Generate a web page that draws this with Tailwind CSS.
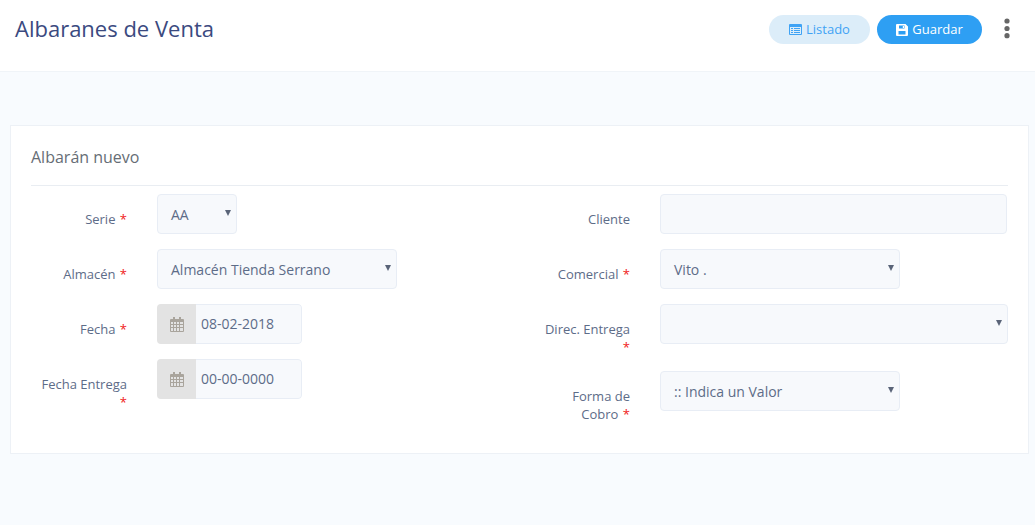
<!DOCTYPE html>
<html lang="es">
<head>
<meta charset="utf-8">
<script src="https://cdn.jsdelivr.net/npm/@tailwindcss/browser@4"></script>
</head>
<body class="m-0 w-[1035px] h-[525px] overflow-hidden bg-[#f8fbfe] font-['Open_Sans',sans-serif] text-[#5d6c88]">
<header class="h-[72px] bg-white border-b border-[#f0f4f8] flex items-start pl-[15px] pr-[25px]">
  <h1 class="text-[22px] leading-[30px] mt-[13px] text-[#3b4a7f] font-normal">Albaranes de Venta</h1>
  <div class="ml-auto flex items-center mt-[15px] h-[29px]">
    <button class="w-[101px] h-[29px] rounded-full bg-[#dcedf9] text-[#3fa3f5] text-[13px] flex items-center justify-center gap-[4px]">
      <svg width="13" height="11" viewBox="0 0 13 11"><path fill="#3fa3f5" fill-rule="evenodd" d="M1 0h11a1 1 0 0 1 1 1v9a1 1 0 0 1-1 1H1a1 1 0 0 1-1-1V1a1 1 0 0 1 1-1zm0 3v7h11V3zm1 1h2v1H2zm3 0h6v1H5zM2 6h2v1H2zm3 0h6v1H5zM2 8h2v1H2zm3 0h6v1H5z"/></svg>
      Listado
    </button>
    <button class="ml-[7px] w-[105px] h-[29px] rounded-full bg-[#2e9ff3] text-white text-[13px] flex items-center justify-center gap-[4px]">
      <svg width="12" height="12" viewBox="0 0 12 12"><path fill="#fff" fill-rule="evenodd" d="M1 0h8.5L12 2.5V11a1 1 0 0 1-1 1H1a1 1 0 0 1-1-1V1a1 1 0 0 1 1-1zm2 1.5v3h5.5v-3zm3.8.4h1.2v2.2H6.8zM2.5 7v3.5h7V7z"/></svg>
      Guardar
    </button>
    <svg class="ml-[22px] mb-[2px]" width="6" height="21" viewBox="0 0 6 21"><circle cx="3" cy="3" r="2.6" fill="#666"/><circle cx="3" cy="10.5" r="2.6" fill="#666"/><circle cx="3" cy="17.7" r="2.6" fill="#666"/></svg>
  </div>
</header>
<main class="mt-[53px] ml-[10px] w-[1019px] h-[329px] bg-white border border-[#edf1f6] px-[20px]">
  <h2 class="h-[60px] border-b border-[#e9edf2] pt-[19px] text-[16px] leading-[24px] font-normal text-[#666d75] w-[977px]">Albarán nuevo</h2>
  <div class="flex mt-[8px] gap-[15px] w-[977px]">
    <div class="w-[488px]">
      <div class="flex mb-[15px]">
        <label class="w-[96px] mr-[30px] pt-[16px] text-right text-[13px] leading-[18px]">Serie <span class="text-[#f02020] ml-px">*</span></label>
        <div class="relative w-[80px] h-[40px] rounded-[4px] border border-[#e8edf5] bg-[#f7f9fc] text-[14px] leading-[40px] pl-[13px]">AA<span class="absolute right-[5px] top-[15px] w-0 h-0 border-x-[3px] border-x-transparent border-t-[6px] border-t-[#5a6478]"></span></div>
      </div>
      <div class="flex mb-[15px]">
        <label class="w-[96px] mr-[30px] pt-[16px] text-right text-[13px] leading-[18px]">Almacén <span class="text-[#f02020] ml-px">*</span></label>
        <div class="relative w-[240px] h-[40px] rounded-[4px] border border-[#e8edf5] bg-[#f7f9fc] text-[14px] leading-[40px] pl-[13px]">Almacén Tienda Serrano<span class="absolute right-[5px] top-[15px] w-0 h-0 border-x-[3px] border-x-transparent border-t-[6px] border-t-[#5a6478]"></span></div>
      </div>
      <div class="flex mb-[15px]">
        <label class="w-[96px] mr-[30px] pt-[16px] text-right text-[13px] leading-[18px]">Fecha <span class="text-[#f02020] ml-px">*</span></label>
        <div class="flex w-[145px] h-[40px] rounded-[4px] text-[14px] leading-[38px] overflow-hidden">
          <span class="w-[39px] bg-[#e3e3e3] flex items-center justify-center"><svg width="14" height="15" viewBox="0 0 14 15"><path fill="#a9a49c" fill-rule="evenodd" d="M3 0h2v2h4V0h2v2h2a1 1 0 0 1 1 1v11a1 1 0 0 1-1 1H1a1 1 0 0 1-1-1V3a1 1 0 0 1 1-1h2zM1 5v2h2V5zm3 0v2h2V5zm3 0v2h2V5zm3 0v2h3V5zM1 8v2h2V8zm3 0v2h2V8zm3 0v2h2V8zm3 0v2h3V8zM1 11v3h2v-3zm3 0v3h2v-3zm3 0v3h2v-3zm3 0v3h3v-3z"/></svg></span>
          <span class="flex-1 pl-[5px] border border-l-0 border-[#e8edf5] rounded-r-[4px] bg-[#f7f9fc]">08-02-2018</span>
        </div>
      </div>
      <div class="flex">
        <label class="w-[96px] mr-[30px] pt-[16px] text-right text-[13px] leading-[18px]">Fecha Entrega <span class="text-[#f02020] ml-px">*</span></label>
        <div class="flex w-[145px] h-[40px] rounded-[4px] text-[14px] leading-[38px] overflow-hidden">
          <span class="w-[39px] bg-[#e3e3e3] flex items-center justify-center"><svg width="14" height="15" viewBox="0 0 14 15"><path fill="#a9a49c" fill-rule="evenodd" d="M3 0h2v2h4V0h2v2h2a1 1 0 0 1 1 1v11a1 1 0 0 1-1 1H1a1 1 0 0 1-1-1V3a1 1 0 0 1 1-1h2zM1 5v2h2V5zm3 0v2h2V5zm3 0v2h2V5zm3 0v2h3V5zM1 8v2h2V8zm3 0v2h2V8zm3 0v2h2V8zm3 0v2h3V8zM1 11v3h2v-3zm3 0v3h2v-3zm3 0v3h2v-3zm3 0v3h3v-3z"/></svg></span>
          <span class="flex-1 pl-[5px] border border-l-0 border-[#e8edf5] rounded-r-[4px] bg-[#f7f9fc]">00-00-0000</span>
        </div>
      </div>
    </div>
    <div class="w-[474px]">
      <div class="flex mb-[15px]">
        <label class="w-[96px] mr-[30px] pt-[16px] text-right text-[13px] leading-[18px]">Cliente</label>
        <div class="w-[347px] h-[40px] rounded-[4px] border border-[#e8edf5] bg-[#f7f9fc]"></div>
      </div>
      <div class="flex mb-[15px]">
        <label class="w-[96px] mr-[30px] pt-[16px] text-right text-[13px] leading-[18px]">Comercial <span class="text-[#f02020] ml-px">*</span></label>
        <div class="relative w-[240px] h-[40px] rounded-[4px] border border-[#e8edf5] bg-[#f7f9fc] text-[14px] leading-[40px] pl-[13px]">Vito .<span class="absolute right-[5px] top-[15px] w-0 h-0 border-x-[3px] border-x-transparent border-t-[6px] border-t-[#5a6478]"></span></div>
      </div>
      <div class="flex mb-[15px]">
        <label class="w-[96px] mr-[30px] pt-[16px] text-right text-[13px] leading-[18px]">Direc. Entrega <span class="text-[#f02020] ml-px">*</span></label>
        <div class="relative w-[348px] h-[40px] rounded-[4px] border border-[#e8edf5] bg-[#f7f9fc]"><span class="absolute right-[5px] top-[15px] w-0 h-0 border-x-[3px] border-x-transparent border-t-[6px] border-t-[#5a6478]"></span></div>
      </div>
      <div class="flex">
        <label class="w-[96px] mr-[30px] pt-[16px] text-right text-[13px] leading-[18px]">Forma de Cobro <span class="text-[#f02020] ml-px">*</span></label>
        <div class="relative w-[240px] h-[40px] rounded-[4px] border border-[#e8edf5] bg-[#f7f9fc] text-[14px] leading-[40px] pl-[13px]">:: Indica un Valor<span class="absolute right-[5px] top-[15px] w-0 h-0 border-x-[3px] border-x-transparent border-t-[6px] border-t-[#5a6478]"></span></div>
      </div>
    </div>
  </div>
</main>
</body>
</html>
